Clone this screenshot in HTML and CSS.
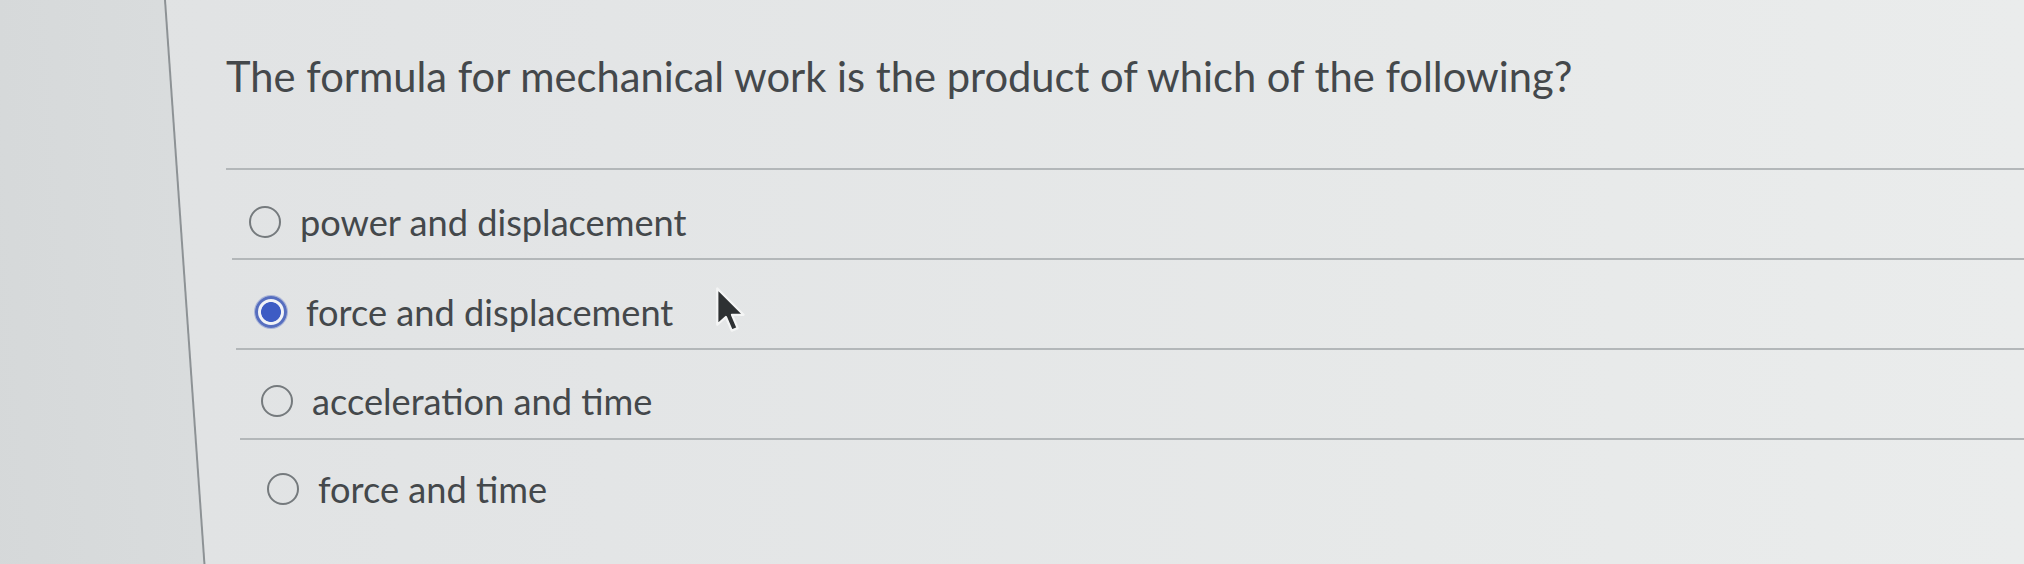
FILE: index.html
```html
<!DOCTYPE html>
<html lang="en">
<head>
<meta charset="utf-8">
<title>Quiz question</title>
<link rel="stylesheet" href="styles.css">
</head>
<body>
<div class="screen">
  <aside class="sidebar"></aside>
  <main class="content">
    <div class="question">The formula for mechanical work is the product of which of the following?</div>
    <ul class="options">
      <li class="option"><span class="radio"></span><span class="label">power and displacement</span></li>
      <li class="option"><span class="radio checked"></span><span class="label">force and displacement</span>
        <svg class="cursor" width="34" height="48" viewBox="0 0 15 21"><path d="M1 1 L1 17 L4.8 13.6 L7.4 19.6 L10 18.5 L7.5 12.6 L12.6 12.6 Z" fill="#2e3133" stroke="#f4f5f5" stroke-width="1" stroke-linejoin="round"/></svg>
      </li>
      <li class="option"><span class="radio"></span><span class="label">acceleration and time</span></li>
      <li class="option"><span class="radio"></span><span class="label">force and time</span></li>
    </ul>
  </main>
</div>
</body>
</html>
```

FILE: styles.css
```css
html, body {
  margin: 0;
  padding: 0;
}
body {
  width: 2024px;
  height: 564px;
  overflow: hidden;
  font-family: Lato, "Noto Sans", sans-serif;
  color: #44484b;
  background: #e2e4e5;
}
.screen {
  display: flex;
  height: 564px;
  background: linear-gradient(90deg, #e0e2e3 0%, #e3e5e6 30%, #e7e9e9 70%, #eaecec 100%);
}
.sidebar {
  width: 186px;
  flex: none;
  position: relative;
}
.sidebar::before {
  content: "";
  position: absolute;
  top: 0;
  bottom: 0;
  left: -60px;
  width: 226px;
  box-sizing: border-box;
  background: linear-gradient(90deg, #d5d8d9, #d9dcdd);
  border-right: 2px solid #8d9295;
  transform: skewX(4deg);
  transform-origin: top left;
}
.content {
  flex: 1;
  padding-left: 40px;
  position: relative;
}
.question {
  font-size: 41.7px;
  line-height: 52px;
  padding-top: 50px;
  height: 170px;
  box-sizing: border-box;
  border-bottom: 2px solid #b3b7b9;
}
.options {
  list-style: none;
  margin: 0;
  padding: 0;
}
.option {
  display: flex;
  align-items: center;
  gap: 19px;
  height: 90px;
  box-sizing: border-box;
  padding-top: 16px;
  border-bottom: 2px solid #b3b7b9;
  position: relative;
  font-size: 36.2px;
}
.option:nth-child(1) { padding-left: 17px; margin-left: 6px; }
.option:nth-child(2) { padding-left: 19px; margin-left: 10px; }
.option:nth-child(3) { padding-left: 21px; margin-left: 14px; padding-top: 13px; }
.option:nth-child(4) { padding-left: 20px; margin-left: 21px; padding-top: 8px; border-bottom: none; }
.radio {
  width: 32px;
  height: 32px;
  box-sizing: border-box;
  border: 2.5px solid #757a7d;
  border-radius: 50%;
  flex: none;
}
.radio.checked {
  border: 3px solid #566ebf;
  background: radial-gradient(circle, #3d5cc4 0 52%, #f1f3f7 56% 100%);
  box-shadow: 0 0 0 1px #a9b4d8;
}
.label {
  line-height: 38px;
}
.cursor {
  position: absolute;
  left: 479px;
  top: 26px;
}
```
